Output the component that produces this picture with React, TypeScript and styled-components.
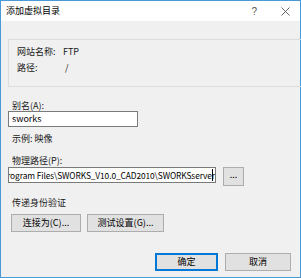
import React from 'react';
import styled, { createGlobalStyle } from 'styled-components';

const GlobalStyle = createGlobalStyle`
  html, body {
    margin: 0;
    padding: 0;
    background: #ffffff;
  }
  body {
    font-family: "Noto Sans CJK SC", "Noto Sans", sans-serif;
    font-size: 9px;
    color: #000000;
  }
`;

const Window = styled.div`
  width: 299px;
  height: 276px;
  border: 1px solid #4a9ad8;
  background: #f0f0f0;
  display: flex;
  flex-direction: column;
`;

const TitleBar = styled.div`
  height: 20px;
  background: #ffffff;
  display: flex;
  align-items: center;
  padding-left: 5px;
  padding-right: 10px;
`;

const Title = styled.div`
  flex: 1;
  font-size: 9px;
  line-height: 12px;
`;

const HelpMark = styled.span`
  font-family: "Liberation Sans", sans-serif;
  font-size: 10px;
  color: #555555;
  margin-right: 24px;
`;

const Body = styled.div`
  flex: 1;
  display: flex;
  flex-direction: column;
  padding: 0 9px 0 7px;
`;

const GroupBox = styled.div`
  margin-top: 18px;
  height: 40px;
  width: 278px;
  border: 1px solid #dcdcdc;
  padding: 6px 8px 0;
  box-sizing: content-box;
  display: flex;
  flex-direction: column;
  gap: 4px;
`;

const InfoRow = styled.div`
  display: flex;
  line-height: 12px;
  color: #1a1a1a;
`;

const InfoKey = styled.span`
  width: 46px;
`;

const Label = styled.div<{ $top: number }>`
  margin-top: ${(p) => p.$top}px;
  margin-left: 4px;
  line-height: 10px;
  height: 10px;
  color: #1a1a1a;
`;

const TextBox = styled.div<{ $width: number }>`
  width: ${(p) => p.$width}px;
  height: 16px;
  box-sizing: border-box;
  border: 1px solid #7a7a7a;
  background: #ffffff;
  display: flex;
  align-items: center;
  overflow: hidden;
  white-space: nowrap;
  line-height: 12px;
`;

const PlainValue = styled.span`
  padding-left: 3px;
`;

const ScrolledValue = styled.div`
  flex: 1;
  display: flex;
  justify-content: flex-end;
  align-items: center;
  overflow: hidden;
  padding-right: 2px;
  font-size: 8.4px;
  letter-spacing: -0.1px;
`;

const Caret = styled.span`
  display: inline-block;
  flex: none;
  width: 1px;
  height: 12px;
  background: #000000;
  margin-left: -3px;
`;

const PathRow = styled.div`
  margin-top: 1px;
  display: flex;
  align-items: flex-start;
  gap: 7px;
`;

const Button = styled.button<{ $width: number; $default?: boolean }>`
  width: ${(p) => p.$width}px;
  height: 18px;
  box-sizing: border-box;
  padding: 0;
  margin: 0;
  font-family: "Noto Sans CJK SC", "Noto Sans", sans-serif;
  font-size: 9px;
  line-height: 12px;
  color: #000000;
  background: #e1e1e1;
  border: ${(p) => (p.$default ? '2px solid #0078d7' : '1px solid #adadad')};
  display: flex;
  align-items: center;
  justify-content: center;
`;

const BrowseButton = styled(Button)`
  height: 19px;
  align-items: flex-end;
  padding-bottom: 4px;
`;

const ButtonRow = styled.div<{ $top: number; $end?: boolean }>`
  margin-top: ${(p) => p.$top}px;
  display: flex;
  gap: ${(p) => (p.$end ? 7 : 6)}px;
  justify-content: ${(p) => (p.$end ? 'flex-end' : 'flex-start')};
  padding-left: ${(p) => (p.$end ? 0 : 3)}px;
`;

function CloseIcon() {
  return (
    <svg width="9" height="9" viewBox="0 0 9 9">
      <path d="M0.5 0.5 L8.5 8.5 M8.5 0.5 L0.5 8.5" stroke="#555555" strokeWidth="0.9" fill="none" />
    </svg>
  );
}

export default function App() {
  return (
    <>
      <GlobalStyle />
      <Window>
        <TitleBar>
          <Title>添加虚拟目录</Title>
          <HelpMark>?</HelpMark>
          <CloseIcon />
        </TitleBar>
        <Body>
          <GroupBox>
            <InfoRow>
              <InfoKey>网站名称:</InfoKey>
              <span>FTP</span>
            </InfoRow>
            <InfoRow>
              <InfoKey>路径:</InfoKey>
              <span>&nbsp;/</span>
            </InfoRow>
          </GroupBox>

          <Label $top={14}>别名(A):</Label>
          <TextBox $width={130}>
            <PlainValue>sworks</PlainValue>
          </TextBox>

          <Label $top={7}>示例: 映像</Label>

          <Label $top={12}>物理路径(P):</Label>
          <PathRow>
            <TextBox $width={208}>
              <ScrolledValue>
                <span>C:\Program Files\SWORKS_V10.0_CAD2010\SWORKSserver</span>
                <Caret />
              </ScrolledValue>
            </TextBox>
            <BrowseButton $width={21}>...</BrowseButton>
          </PathRow>

          <Label $top={12}>传递身份验证</Label>
          <ButtonRow $top={6}>
            <Button $width={70}>连接为(C)...</Button>
            <Button $width={77}>测试设置(G)...</Button>
          </ButtonRow>

          <ButtonRow $top={21} $end>
            <Button $width={63} $default>确定</Button>
            <Button $width={66}>取消</Button>
          </ButtonRow>
        </Body>
      </Window>
    </>
  );
}
